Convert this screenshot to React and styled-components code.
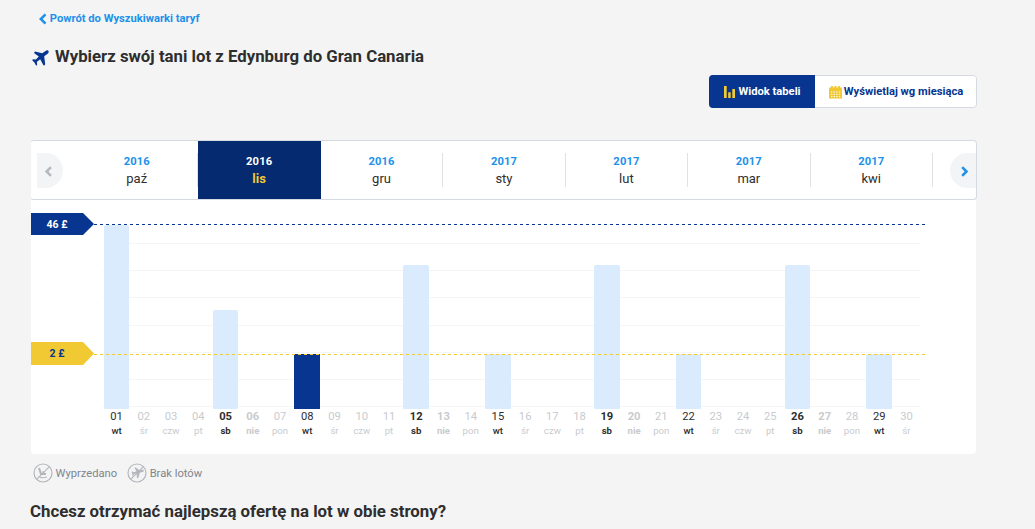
import React from 'react'
import styled, { createGlobalStyle } from 'styled-components'

const months = [
    { year: 2016, name: 'paź' },
    { year: 2016, name: 'lis', selected: true },
    { year: 2016, name: 'gru' },
    { year: 2017, name: 'sty' },
    { year: 2017, name: 'lut' },
    { year: 2017, name: 'mar' },
    { year: 2017, name: 'kwi' }
]

const weekDays = ['wt', 'śr', 'czw', 'pt', 'sb', 'nie', 'pon']

// bar height in px for the days that have a flight
const bars = { 1: 184, 5: 99, 8: 55, 12: 144, 15: 55, 19: 144, 22: 55, 26: 144, 29: 55 }
const selectedDay = 8

const days = Array.from({ length: 30 }, (_, i) => ({
    number: i + 1,
    label: String(i + 1).padStart(2, '0'),
    weekDay: weekDays[i % 7],
    height: bars[i + 1]
}))

const planePath = 'M16.5.9c.5.8 0 2-1.200 3.100L12.200 6.300l1 8.200-1.500 1.300-3.500-6.500-3.400 2.600.4 2.900-1 .9-1.800-3.300L.2 10.300l.7-1 3 .2 2.900-3L2 3.100l1-1.500 7.200 1.700L13.100 1.200C14.500.2 16 .1 16.500.9z'

const Chevron = ({ size, width = 2.6, flip }) => (
    <svg width={size * 0.65} height={size} viewBox="0 0 7.8 12" fill="none" stroke="currentColor" strokeWidth={width}>
        <path d={flip ? 'M1.3 1.3 6 6 1.3 10.7' : 'M6.5 1.3 1.8 6l4.7 4.7'} />
    </svg>
)

const PlaneIcon = () => (
    <svg width="17" height="17" viewBox="0 0 17 17" fill="currentColor">
        <path d={planePath} />
    </svg>
)

const SoldOutIcon = () => (
    <svg width="20" height="20" viewBox="0 0 20 20" fill="none" stroke="currentColor">
        <circle cx="10" cy="10" r="9" strokeWidth="1.2" />
        <path d="M6 5 8 11h5" strokeWidth="2" />
        <path d="M8.800 9h3.200M6 13.300c1.500 1.500 5.500 1.500 8 .7" strokeWidth="1.200" />
        <path d="M3.800 16.200 16.200 3.800" strokeWidth="1.100" />
    </svg>
)

const NoFlightsIcon = () => (
    <svg width="20" height="20" viewBox="0 0 20 20" fill="none" stroke="currentColor">
        <circle cx="10" cy="10" r="9" strokeWidth="1.2" />
        <path d={planePath} transform="translate(10 10) rotate(24) scale(.66) translate(-8.5 -8.500)" fill="currentColor" stroke="none" />
        <path d="M3.800 16.200 16.200 3.800" strokeWidth="1.100" />
    </svg>
)

const TableIcon = () => (
    <svg width="11" height="13" viewBox="0 0 11 13" fill="currentColor">
        <path d="M0 0h2.700v12H0zM4.200 6.300h2.500V12H4.200zM8.300 3h2.700v9H8.300z" />
    </svg>
)

const CalendarIcon = () => (
    <svg width="13" height="13" viewBox="0 0 13 13" fill="currentColor">
        <path d="M0 1.500h2V0h2v1.500h1.500V0h2v1.500H9V0h2v1.500h2v11H0z" />
        <path d="M2 6h9.500M2 8.300h9.500M2 10.600h9.500" stroke="white" strokeWidth="1" strokeDasharray="1.400 1.200" />
    </svg>
)

export default function App() {
    return (
        <Page>
            <GlobalStyle />
            <BackLink><Chevron size={12} />Powrót do Wyszukiwarki taryf</BackLink>
            <Title><PlaneIcon />Wybierz swój tani lot z Edynburg do Gran Canaria</Title>
            <ViewSwitch>
                <ViewButton $active><TableIcon />Widok tabeli</ViewButton>
                <ViewButton><CalendarIcon />Wyświetlaj wg miesiąca</ViewButton>
            </ViewSwitch>

            <MonthBar>
                <ArrowButton><Chevron size={11} width={2.8} /></ArrowButton>
                <MonthList>
                    {months.map(month => (
                        <Month key={month.name} $selected={month.selected}>
                            <Year>{month.year}</Year>
                            <MonthName>{month.name}</MonthName>
                        </Month>
                    ))}
                </MonthList>
                <ArrowButton $next><Chevron size={11} width={2.8} flip /></ArrowButton>
            </MonthBar>

            <ChartCard>
                <Chart>
                    {days.map(day => (
                        <Day
                            key={day.number}
                            $available={!!day.height}
                            $bold={day.weekDay === 'sb' || day.weekDay === 'nie'}
                        >
                            <BarArea>
                                {day.height && <Bar $selected={day.number === selectedDay} style={{ height: day.height }} />}
                            </BarArea>
                            <DayNumber>{day.label}</DayNumber>
                            <WeekDay>{day.weekDay}</WeekDay>
                        </Day>
                    ))}
                </Chart>
                <PriceLine $top={13} $height={22} $color="#073590">
                    <PriceTag $background="#073590" $color="white">46 £</PriceTag>
                </PriceLine>
                <PriceLine $top={142} $height={23} $color="#f1c933">
                    <PriceTag $background="#f1c933" $color="#073590">2 £</PriceTag>
                </PriceLine>
            </ChartCard>

            <Legend>
                <LegendItem><SoldOutIcon />Wyprzedano</LegendItem>
                <LegendItem><NoFlightsIcon />Brak lotów</LegendItem>
            </Legend>
            <Question>Chcesz otrzymać najlepszą ofertę na lot w obie strony?</Question>
        </Page>
    )
}

const GlobalStyle = createGlobalStyle`
* {
    box-sizing: border-box;
}

body {
    margin: 0;
    background: #f4f4f4;
    color: #2e2e2e;
    font-family: Roboto, "Liberation Sans", sans-serif;
}
`

const Page = styled.div`
width: 1035px;
height: 529px;
overflow: hidden;
padding: 10px 58px 0 30px;
`

const BackLink = styled.a`
display: flex;
align-items: center;
height: 17px;
padding-left: 9px;
gap: 3px;
font-size: 11.2px;
font-weight: 700;
color: #2091eb;
`

const Title = styled.h1`
display: flex;
align-items: center;
height: 22px;
margin: 18px 0 0;
padding-left: 2px;
gap: 6px;
font-size: 16.8px;
font-weight: 700;
white-space: nowrap;

svg {
    margin-top: 4px;
    color: #073590;
}
`

const ViewSwitch = styled.div`
display: flex;
width: 268px;
height: 33px;
margin: 8px 0 0 auto;
border: 1px solid #d5d9e0;
border-radius: 4px;
background: white;
`

const ViewButton = styled.button`
display: flex;
align-items: center;
justify-content: center;
gap: ${props => props.$active ? '3px' : '2px'};
width: ${props => props.$active ? '106px' : '161px'};
flex: none;
margin: ${props => props.$active ? '-1px 0 -1px -1px' : '0'};
padding: 0 0 0 1px;
border: 0;
border-radius: ${props => props.$active ? '4px 0 0 4px' : '0 4px 4px 0'};
background: ${props => props.$active ? '#073590' : 'white'};
color: ${props => props.$active ? 'white' : '#073590'};
font: 700 11.2px Roboto, sans-serif;
white-space: nowrap;

svg {
    flex: none;
    margin-top: 1px;
    color: #f1c933;
}
`

const MonthBar = styled.div`
display: flex;
align-items: center;
width: 947px;
height: 60px;
margin-top: 32px;
border: 1px solid #d5d9e0;
border-left-color: #f1f2f4;
border-radius: 4px;
background: white;
`

const ArrowButton = styled.div`
display: flex;
align-items: center;
justify-content: center;
flex: none;
width: 26px;
height: 35px;
margin: ${props => props.$next ? '0 0 0 17px' : '0 0 0 6px'};
padding: ${props => props.$next ? '3px 0 0 4px' : '3px 3px 0 0'};
border-radius: ${props => props.$next ? '18px 0 0 18px' : '0 18px 18px 0'};
background: #f3f4f5;
color: ${props => props.$next ? '#2091eb' : '#b5b9bf'};
`

const MonthList = styled.div`
display: flex;
align-items: center;
flex: none;
width: 857px;
height: 58px;
margin-left: 13px;
`

const Year = styled.div`
font-size: 11.2px;
line-height: 14px;
font-weight: 700;
letter-spacing: 0.1px;
color: #2091eb;
`

const MonthName = styled.div`
font-size: 13px;
line-height: 20px;
`

const Month = styled.div`
flex: 1;
height: ${props => props.$selected ? '58px' : '34px'};
padding-top: ${props => props.$selected ? '14px' : '2px'};
border-right: 1px solid ${props => props.$selected ? '#052a6f' : '#dfe1e4'};
background: ${props => props.$selected ? '#052a6f' : 'white'};
text-align: center;

${Year} {
    color: ${props => props.$selected ? 'white' : '#2091eb'};
}

${MonthName} {
    color: ${props => props.$selected ? '#f1c933' : '#2e2e2e'};
    font-weight: ${props => props.$selected ? 700 : 400};
}
`

const ChartCard = styled.div`
position: relative;
width: 946px;
height: 254px;
padding: 0 56px 0 73px;
border-left: 1px solid #f4f4f4;
border-radius: 0 0 4px 4px;
background: white;
`

const Chart = styled.div`
display: flex;
width: 817px;
height: 254px;
margin-left: -1px;
background: repeating-linear-gradient(to bottom, #f4f5f6 0 1px, transparent 1px 27.2px) 0 43px / 100% 165px no-repeat;
`

const BarArea = styled.div`
display: flex;
align-items: flex-end;
justify-content: center;
height: 209px;
`

const Bar = styled.div`
width: 25.6px;
background: ${props => props.$selected ? '#073590' : '#daebfd'};
border-radius: ${props => props.$selected ? '0' : '2px 2px 1px 1px'};
`

const DayNumber = styled.div`
padding-top: 1px;
font-size: 11.2px;
line-height: 14px;
`

const WeekDay = styled.div`
font-size: 9.6px;
line-height: 13px;
`

const Day = styled.div`
flex: 1;
min-width: 0;
text-align: center;
color: ${props => props.$available ? '#2e2e2e' : '#c8cbce'};
font-weight: ${props => props.$bold ? 700 : 400};

${WeekDay} {
    font-weight: ${props => props.$available && !props.$bold ? 500 : 'inherit'};
}
`

// price marker lies over the bars
const PriceLine = styled.div`
position: absolute;
left: 0;
top: ${props => props.$top}px;
display: flex;
align-items: center;
width: 894px;
height: ${props => props.$height}px;

&::after {
    content: '';
    flex: 1;
    height: 1px;
    margin-top: 1px;
    background: repeating-linear-gradient(to right, ${props => props.$color} 0 3px, transparent 3px 6px);
}
`

const PriceTag = styled.div`
width: 63px;
height: 100%;
padding-right: 11px;
background: ${props => props.$background};
clip-path: polygon(0 0, 52px 0, 100% 50%, 52px 100%, 0 100%);
font-size: 10.5px;
font-weight: 700;
line-height: 23px;
text-align: center;
color: ${props => props.$color};
`

const Legend = styled.div`
display: flex;
align-items: center;
gap: 10px;
height: 20px;
margin: 9px 0 0 3px;
`

const LegendItem = styled.div`
display: flex;
align-items: center;
gap: 3px;
height: 18px;
font-size: 11.2px;
color: #7f858d;

svg {
    margin-left: -0.5px;
    color: #b3b6bb;
}
`

const Question = styled.h2`
margin: 17px 0 0;
font-size: 16.82px;
line-height: 22px;
font-weight: 700;
white-space: nowrap;
`
